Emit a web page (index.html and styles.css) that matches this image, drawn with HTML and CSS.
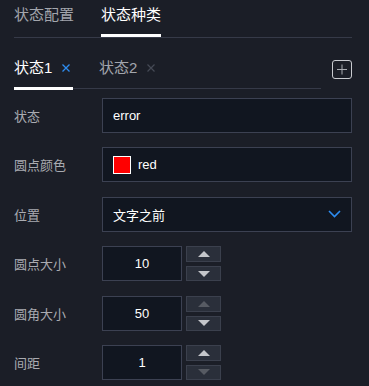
FILE: index.html
```html
<!DOCTYPE html>
<html>
<head>
  <title>状态种类</title>
  <link rel="stylesheet" href="styles.css">
</head>
<body>
  <div class="panel">
    <div class="top-tabs">
      <div class="top-tab">状态配置</div>
      <div class="top-tab active">状态种类</div>
    </div>

    <div class="state-bar">
      <div class="state-tabs">
        <div class="state-tab active">状态1
          <svg class="close" width="8" height="8" viewBox="0 0 8 8"><path d="M0.5 0.5l7 7M7.5 0.5l-7 7" stroke="#2d8cf0" stroke-width="1.3"/></svg>
        </div>
        <div class="state-tab">状态2
          <svg class="close" width="8" height="8" viewBox="0 0 8 8"><path d="M0.5 0.5l7 7M7.5 0.5l-7 7" stroke="#454955" stroke-width="1.2"/></svg>
        </div>
      </div>
      <div class="add-btn">
        <svg width="20" height="19" viewBox="0 0 20 19">
          <rect x="0.5" y="0.5" width="19" height="18" rx="2.5" fill="none" stroke="#c9cbd0"/>
          <path d="M10 4.5v10M5 9.5h10" stroke="#a9acb2" stroke-width="1"/>
        </svg>
      </div>
    </div>

    <div class="form">
      <div class="row">
        <label class="label">状态</label>
        <div class="field text">error</div>
      </div>
      <div class="row">
        <label class="label">圆点颜色</label>
        <div class="field text"><span class="swatch"></span>red</div>
      </div>
      <div class="row">
        <label class="label">位置</label>
        <div class="field text select">
          文字之前
          <svg class="chevron" width="13" height="8" viewBox="0 0 13 8">
            <path d="M1 1l5.5 5.5L12 1" fill="none" stroke="#2d8cf0" stroke-width="1.6"/>
          </svg>
        </div>
      </div>
      <div class="row">
        <label class="label">圆点大小</label>
        <div class="field number">10</div>
        <div class="spin">
          <div class="spin-btn"><span class="tri up"></span></div>
          <div class="spin-btn down"><span class="tri dn"></span></div>
        </div>
      </div>
      <div class="row">
        <label class="label">圆角大小</label>
        <div class="field number">50</div>
        <div class="spin">
          <div class="spin-btn"><span class="tri up off"></span></div>
          <div class="spin-btn down"><span class="tri dn"></span></div>
        </div>
      </div>
      <div class="row">
        <label class="label">间距</label>
        <div class="field number">1</div>
        <div class="spin">
          <div class="spin-btn"><span class="tri up"></span></div>
          <div class="spin-btn down"><span class="tri dn off"></span></div>
        </div>
      </div>
    </div>
  </div>
</body>
</html>
```

FILE: styles.css
```css
body {
  margin: 0;
  background: #1b1e27;
  font-family: "Liberation Sans", "Noto Sans CJK SC", sans-serif;
  color: #fff;
}
.panel {
  padding: 0 17px 0 14px;
}
.top-tabs {
  display: flex;
  gap: 27px;
  height: 37px;
  border-bottom: 1px solid #363a48;
}
.top-tab {
  font-size: 15px;
  line-height: 30px;
  color: #a3a6ad;
  box-sizing: border-box;
  height: 37px;
}
.top-tab.active {
  color: #fff;
  border-bottom: 3px solid #fff;
}
.state-bar {
  display: flex;
  align-items: flex-start;
  margin-top: 13px;
}
.state-tabs {
  display: flex;
  align-items: flex-start;
  gap: 26px;
  width: 307px;
  height: 38px;
  border-bottom: 1px solid #363a48;
  box-sizing: border-box;
}
.state-tab {
  display: flex;
  align-items: center;
  font-size: 15px;
  color: #a3a6ad;
  width: 59px;
  height: 31px;
  white-space: nowrap;
}
.state-tab.active {
  color: #fff;
  border-bottom: 3px solid #fff;
  padding-bottom: 5px;
}
.close {
  margin-left: 10px;
  margin-top: 3px;
}
.add-btn {
  margin-left: 11px;
  margin-top: 9px;
  height: 19px;
}
.add-btn svg {
  display: block;
}
.form {
  display: flex;
  flex-direction: column;
  gap: 14.4px;
  margin-top: 9px;
}
.row {
  display: flex;
  align-items: center;
  height: 35px;
}
.label {
  width: 88px;
  font-size: 13px;
  color: #a9abb1;
}
.field {
  height: 35px;
  box-sizing: border-box;
  background: #111620;
  border: 1px solid #3c4152;
  font-size: 13px;
  color: #fff;
  display: flex;
  align-items: center;
}
.text {
  flex: 1;
  padding-left: 10px;
}
.select {
  justify-content: space-between;
  padding-right: 10px;
}
.swatch {
  width: 16px;
  height: 16px;
  background: #f00;
  border: 1px solid #fff;
  margin-right: 7px;
}
.number {
  width: 80px;
  justify-content: center;
}
.spin {
  display: flex;
  flex-direction: column;
  gap: 4px;
  margin-left: 4px;
}
.spin-btn {
  width: 35px;
  height: 16px;
  box-sizing: border-box;
  background: #2a2f3a;
  border: 1px solid #3b404d;
  display: flex;
  align-items: center;
  justify-content: center;
}
.spin-btn.down {
  height: 15px;
}
.tri {
  width: 0;
  height: 0;
  border-left: 6px solid transparent;
  border-right: 6px solid transparent;
}
.tri.up {
  border-bottom: 6px solid #c4c6ca;
}
.tri.dn {
  border-top: 6px solid #c4c6ca;
}
.tri.up.off {
  border-bottom-color: #575b63;
}
.tri.dn.off {
  border-top-color: #575b63;
}
```
